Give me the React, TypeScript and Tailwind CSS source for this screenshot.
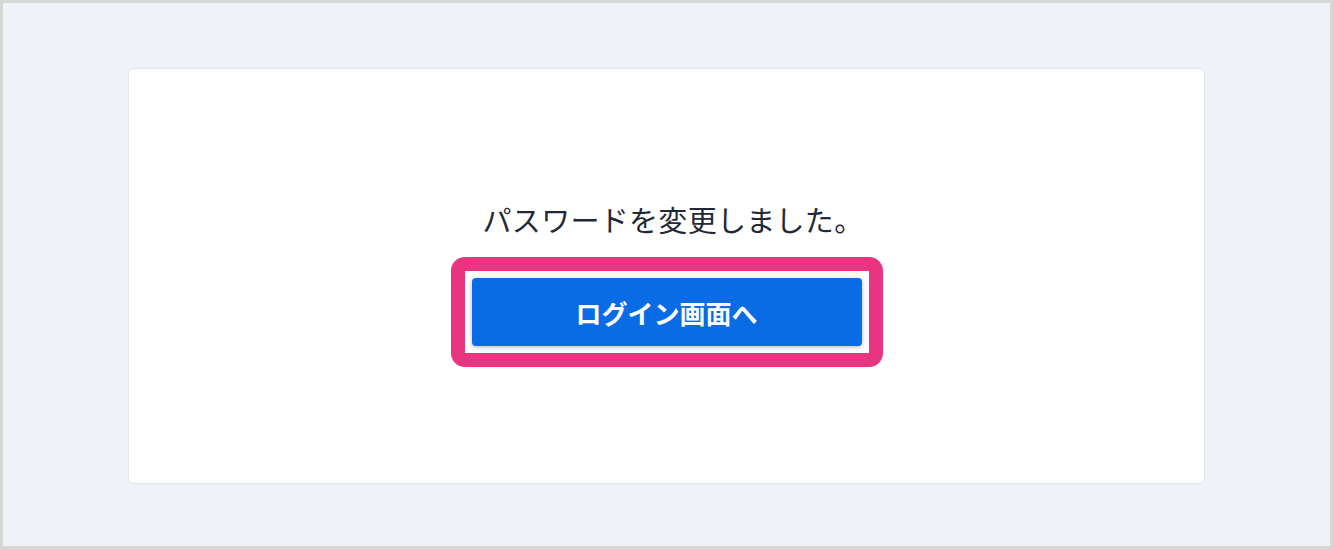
import React from "react";

export default function App() {
  return (
    <div
      className="w-[1333px] h-[549px] box-border border-[3px] border-[#d6d6d6] bg-[#eff2f7] overflow-hidden"
      style={{ fontFamily: '"Noto Sans CJK JP", "Noto Sans", sans-serif' }}
    >
      <div className="ml-[125px] mt-[65px] w-[1077px] h-[416px] box-border rounded-[5px] border border-[#e2e5ea] bg-white flex flex-col items-center pt-[129px]">
        <p className="pl-[13px] text-[29px] leading-[42px] text-[#1f2937] tracking-[0.3px]">
          パスワードを変更しました。
        </p>
        <div className="mt-[17px] w-[432px] h-[110px] box-border rounded-[14px] border-[14px] border-[#e9357f] bg-white p-[7px]">
          <button className="w-[390px] h-[68px] rounded-[4px] bg-[#0a6ce4] text-white text-[26px] font-bold shadow-[0_1px_4px_rgba(0,0,0,0.3)] flex items-center justify-center">
            ログイン画面へ
          </button>
        </div>
      </div>
    </div>
  );
}
